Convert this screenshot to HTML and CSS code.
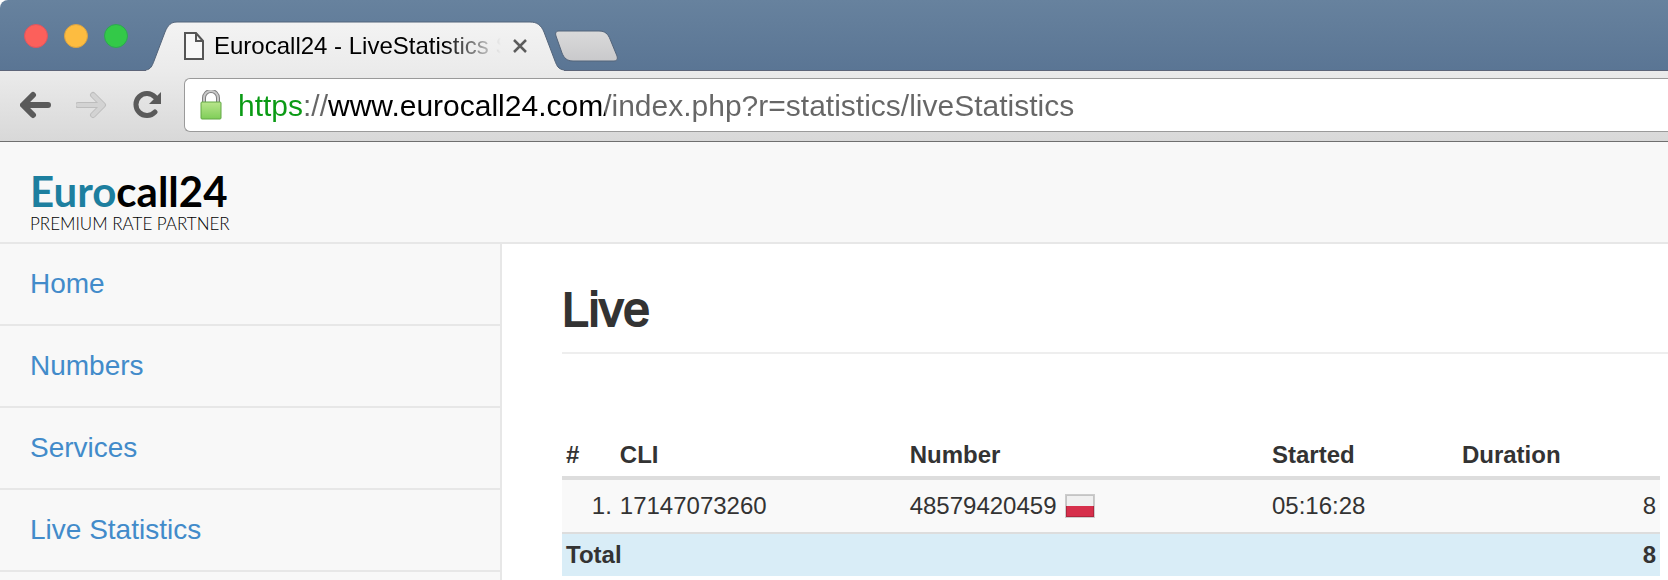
FILE: index.html
```html
<!DOCTYPE html>
<html lang="en">
<head>
    <meta charset="UTF-8">
    <meta name="viewport" content="width=device-width, initial-scale=1.0">
    <title>Eurocall24 - LiveStatistics</title>
    <link rel="stylesheet" href="styles.css">
</head>
<body>

    <div class="titlebar">
        <div class="lights">
            <button class="light red" aria-label="Close"></button>
            <button class="light yellow" aria-label="Minimize"></button>
            <button class="light green" aria-label="Zoom"></button>
        </div>

        <div class="tab">
            <svg class="tab-shape" viewBox="0 0 418 50" aria-hidden="true">
                <defs>
                    <linearGradient id="tabfill" x1="0" y1="0" x2="0" y2="1">
                        <stop offset="0" stop-color="#f3f3f3"/>
                        <stop offset="1" stop-color="#ebebeb"/>
                    </linearGradient>
                </defs>
                <path d="M0 50 V49 C5 48 6 45 8 40 L19 11 C22 4 25 1 31 1 H384 C391 1 395 4 398 11 L409 40 C411 45 412 48 418 49 V50 Z" fill="url(#tabfill)"/>
                <path d="M0 49 C5 48 6 45 8 40 L19 11 C22 4 25 1 31 1 H384 C391 1 395 4 398 11 L409 40 C411 45 412 48 418 49" fill="none" stroke="#53647a"/>
            </svg>
            <svg class="page-icon" viewBox="0 0 20 28" aria-hidden="true">
                <path d="M1 1 H12 L19 9 V27 H1 Z M12 1 V9 H19" fill="#f8f8f8" stroke="#555" stroke-width="2"/>
            </svg>
            <span class="tab-title">Eurocall24 - LiveStatistics S</span>
            <button class="tab-close" aria-label="Close tab">
                <svg viewBox="0 0 14 14"><path d="M1 1 L13 13 M13 1 L1 13" stroke="#5c5c5c" stroke-width="2.5"/></svg>
            </button>
        </div>

        <button class="new-tab" aria-label="New tab">
            <svg viewBox="0 0 64 32">
                <defs>
                    <linearGradient id="newfill" x1="0" y1="0" x2="0" y2="1">
                        <stop offset="0" stop-color="#dadada"/>
                        <stop offset="1" stop-color="#c9c9cb"/>
                    </linearGradient>
                </defs>
                <path d="M5 1 H45 C51 1 54 4 56 9 L63 26 C64 29 63 31 60 31 H19 C13 31 10 28 8 23 L2 6 C1 3 2 1 5 1 Z" fill="url(#newfill)" stroke="#53647a"/>
            </svg>
        </button>
    </div>

    <div class="toolbar">
        <button class="nav-btn" aria-label="Back">
            <svg viewBox="0 0 32 28"><path d="M28 14 H4 M13 4 L3 14 L13 24" fill="none" stroke="#5a5a5a" stroke-width="6" stroke-linecap="round" stroke-linejoin="round"/></svg>
        </button>
        <button class="nav-btn" aria-label="Forward" disabled>
            <svg viewBox="0 0 32 28"><path d="M2 14 H26 M17 4 L27 14 L17 24" fill="none" stroke="#bdbdbd" stroke-width="6" stroke-linecap="round" stroke-linejoin="round"/><path d="M2 14 H26 M17 4 L27 14 L17 24" fill="none" stroke="#d3d3d3" stroke-width="4" stroke-linecap="round" stroke-linejoin="round"/></svg>
        </button>
        <button class="nav-btn reload" aria-label="Reload">
            <svg viewBox="0 0 30 28"><path d="M23 21 A11 11 0 1 1 23 6" fill="none" stroke="#5a5a5a" stroke-width="5" stroke-linecap="round"/><path d="M29 1 V13 H17 Z" fill="#5a5a5a"/></svg>
        </button>
        <div class="address">
            <svg class="lock" viewBox="0 0 22 30" aria-hidden="true">
                <defs>
                    <linearGradient id="lockfill" x1="0" y1="0" x2="0" y2="1">
                        <stop offset="0" stop-color="#b9e58c"/>
                        <stop offset="1" stop-color="#7fce58"/>
                    </linearGradient>
                </defs>
                <path d="M4 13 V8 A7 7 0 0 1 18 8 V13" fill="none" stroke="#7d7d7d" stroke-width="4"/>
                <path d="M4 13 V8 A7 7 0 0 1 18 8 V13" fill="none" stroke="#c9c9c9" stroke-width="2"/>
                <rect x="1" y="12" width="20" height="17" rx="1" fill="url(#lockfill)" stroke="#62a845"/>
            </svg>
            <input class="url" type="text" aria-label="Address" spellcheck="false" value="https://www.eurocall24.com/index.php?r=statistics/liveStatistics">
        </div>
    </div>

    <header class="header">
        <a class="brand" href="#">
            <span class="brand-name"><span class="brand-blue">Euro</span>call24</span>
            <span class="brand-tag">PREMIUM RATE PARTNER</span>
        </a>
    </header>

    <div class="content">
        <nav class="sidebar">
            <a href="#">Home</a>
            <a href="#">Numbers</a>
            <a href="#">Services</a>
            <a href="#">Live Statistics</a>
        </nav>

        <main class="main">
            <h2>Live</h2>
            <div class="table-wrap">
                <table>
                    <colgroup>
                        <col class="col-index">
                        <col class="col-cli">
                        <col class="col-number">
                        <col class="col-started">
                        <col>
                    </colgroup>
                    <thead>
                        <tr>
                            <th>#</th>
                            <th>CLI</th>
                            <th>Number</th>
                            <th>Started</th>
                            <th>Duration</th>
                        </tr>
                    </thead>
                    <tbody>
                        <tr>
                            <td class="right">1.</td>
                            <td>17147073260</td>
                            <td>
                                <span class="number">48579420459
                                    <svg class="flag" viewBox="0 0 30 24" role="img" aria-label="Poland">
                                        <rect x="1" y="1" width="28" height="22" fill="#f0f0f0"/>
                                        <rect x="1" y="12" width="28" height="11" fill="#d62f4b"/>
                                        <rect x="1" y="1" width="28" height="22" fill="none" stroke="#000" stroke-opacity="0.18" stroke-width="2"/>
                                    </svg>
                                </span>
                            </td>
                            <td>05:16:28</td>
                            <td class="right">8</td>
                        </tr>
                    </tbody>
                    <tfoot>
                        <tr>
                            <th colspan="4">Total</th>
                            <th class="right">8</th>
                        </tr>
                    </tfoot>
                </table>
            </div>
        </main>
    </div>

</body>
</html>
```

FILE: styles.css
```css
* {
    box-sizing: border-box;
}
body {
    display: flex;
    flex-direction: column;
    min-height: 100vh;
    margin: 0;
    font-family: "Liberation Sans", Arial, sans-serif;
    font-size: 24px;
    line-height: 34px;
    color: #333;
    background-color: #fff;
}
button {
    padding: 0;
    border: none;
    background: none;
}
svg {
    display: block;
}

/* browser window */
.titlebar {
    display: flex;
    align-items: flex-end;
    height: 71px;
    padding-left: 24px;
    border-bottom: 1px solid #5d6579;
    border-top-left-radius: 8px;
    background: linear-gradient(#67829e, #5a7594);
}
.lights {
    display: flex;
    gap: 16px;
    width: 122px;
    padding-bottom: 22px;
}
.light {
    width: 24px;
    height: 24px;
    border-radius: 50%;
}
.red {
    background-color: #fc605b;
    border: 1px solid #dd5560;
}
.yellow {
    background-color: #fdbc40;
    border: 1px solid #d9a243;
}
.green {
    background-color: #33c948;
    border: 1px solid #2ea553;
}
.tab {
    position: relative;
    display: flex;
    align-items: center;
    width: 418px;
    height: 50px;
    margin-bottom: -1px;
    padding: 0 37px 0 38px;
}
.tab-shape {
    position: absolute;
    left: 0;
    top: 0;
    width: 100%;
    height: 100%;
}
.page-icon {
    position: relative;
    width: 20px;
    height: 28px;
}
.tab-title {
    position: relative;
    flex: 1;
    margin-left: 10px;
    overflow: hidden;
    white-space: nowrap;
    color: #000;
    -webkit-mask-image: linear-gradient(to right, #000 80%, transparent 100%);
    mask-image: linear-gradient(to right, #000 80%, transparent 100%);
}
.tab-close {
    position: relative;
    width: 14px;
    margin-left: 12px;
}
.new-tab {
    width: 64px;
    height: 32px;
    margin: 0 0 8px -10px;
}
.toolbar {
    display: flex;
    align-items: center;
    height: 71px;
    padding: 7px 0 9px 20px;
    border-bottom: 1px solid #6f6f6f;
    background: linear-gradient(#ebebeb, #d8d8d8);
}
.nav-btn {
    width: 32px;
    height: 28px;
    margin-right: 24px;
}
.reload {
    width: 30px;
    margin-right: 22px;
}
.address {
    display: flex;
    align-items: center;
    flex: 1;
    height: 54px;
    padding-left: 15px;
    border: 1px solid #9a9a9a;
    border-right: none;
    border-radius: 6px 0 0 6px;
    background-color: #fff;
}
.lock {
    width: 22px;
    height: 30px;
}
/* scheme, host and path each have their own colour */
.url {
    flex: 1;
    min-width: 0;
    height: 40px;
    margin-left: 16px;
    padding: 2px 0 0;
    border: none;
    outline: none;
    font-family: inherit;
    font-size: 30px;
    color: transparent;
    caret-color: #000;
    background: linear-gradient(to right, #0a9a14 65px, #666 65px 90px, #000 90px 367px, #666 367px);
    -webkit-background-clip: text;
    background-clip: text;
}

/* page */
.header {
    height: 102px;
    padding: 26px 30px 0;
    border-bottom: 2px solid #e7e7e7;
    background-color: #f8f8f8;
}
.brand {
    display: inline-flex;
    flex-direction: column;
    font-family: Lato, sans-serif;
    color: #000;
    text-decoration: none;
}
.brand-name {
    font-size: 42px;
    font-weight: bold;
    line-height: 46px;
}
.brand-blue {
    color: #1d7f9f;
}
.brand-tag {
    font-size: 17px;
    font-weight: 300;
    line-height: 20px;
}
.content {
    display: flex;
    flex: 1;
}
.sidebar {
    flex: 0 0 502px;
    border-right: 2px solid #e7e7e7;
    background-color: #f8f8f8;
}
.sidebar a {
    display: block;
    padding: 20px 30px;
    border-bottom: 2px solid #e7e7e7;
    font-size: 28px;
    line-height: 40px;
    color: #428bca;
    text-decoration: none;
}
.main {
    flex: 1;
    min-width: 0;
    padding: 40px 0 0 60px;
}
h2 {
    margin: 0 0 80px;
    padding-bottom: 16px;
    border-bottom: 2px solid #eee;
    font-size: 48px;
    font-weight: normal;
    line-height: 52px;
    -webkit-text-stroke: 2px #333;
}
.table-wrap {
    padding-right: 8px;
}
table {
    width: 100%;
    table-layout: fixed;
    border-collapse: separate;
    border-spacing: 0;
}
.col-index {
    width: 4.9%;
}
.col-cli {
    width: 26.4%;
}
.col-number {
    width: 33%;
}
.col-started {
    width: 17.3%;
}
th {
    padding: 4px;
    text-align: left;
}
thead th {
    border-bottom: 4px solid #ddd;
}
td {
    padding: 9px 4px;
    background-color: #f9f9f9;
}
tfoot th {
    border-top: 2px solid #ddd;
    background-color: #d9edf7;
}
.right {
    text-align: right;
}
.number {
    display: flex;
    align-items: center;
    gap: 9px;
}
.flag {
    width: 30px;
    height: 24px;
}
```
